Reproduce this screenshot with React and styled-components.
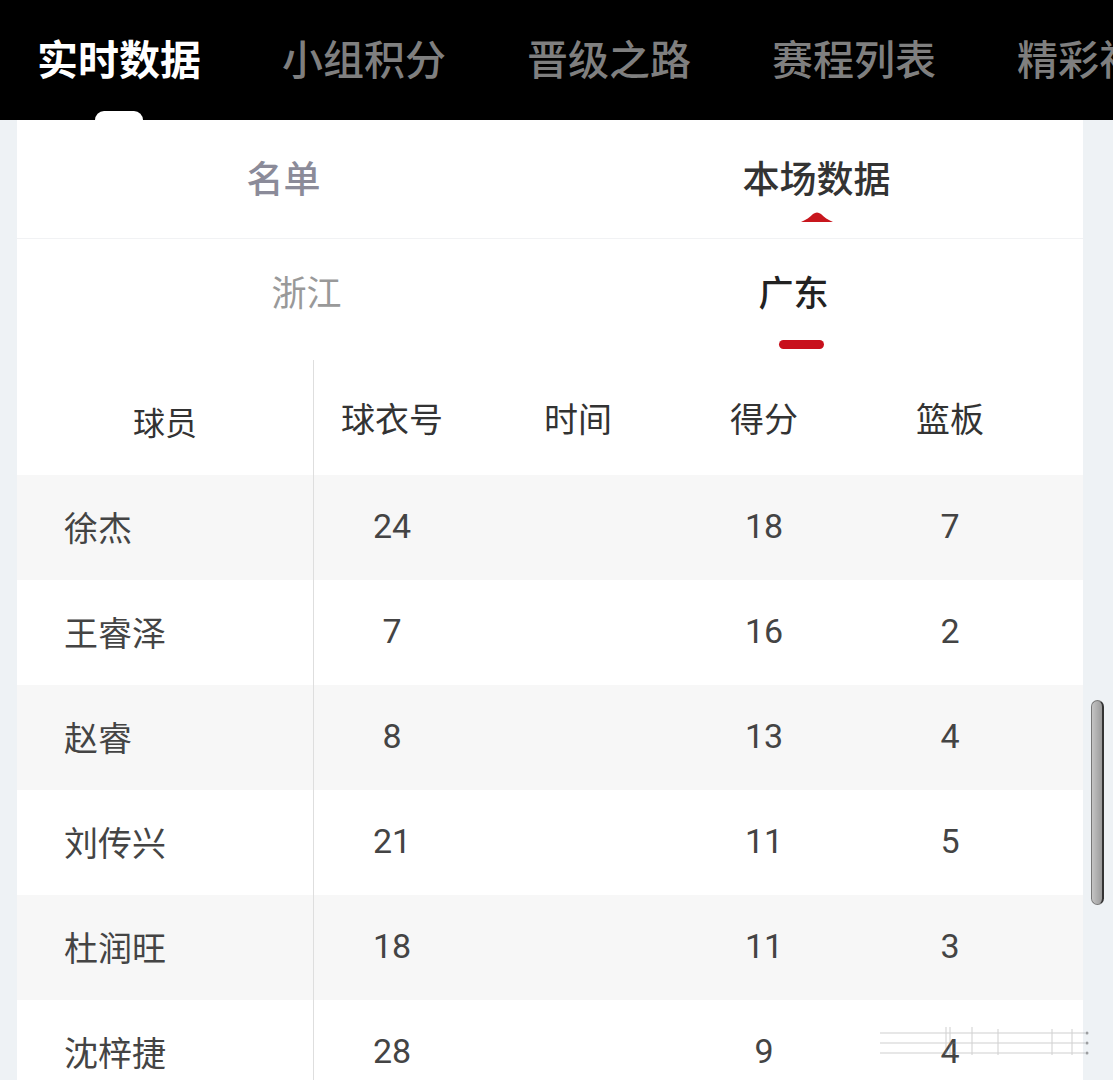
import React from 'react';
import styled, { createGlobalStyle } from 'styled-components';

const GlobalStyle = createGlobalStyle`
  body {
    margin: 0;
    background: #eef2f5;
    font-family: Roboto, 'Noto Sans CJK SC', sans-serif;
  }
`;

const Page = styled.div`
  width: 1113px;
  min-height: 1080px;
  background: #eef2f5;
  overflow: hidden;
`;

const TopBar = styled.nav`
  height: 120px;
  background: #000;
  display: flex;
  gap: 81px;
  padding-left: 37px;
  overflow: hidden;
  white-space: nowrap;
`;

const TopTab = styled.div`
  position: relative;
  display: flex;
  align-items: center;
  padding-bottom: 6px;
  font-family: 'Noto Sans CJK SC', sans-serif;
  font-size: 41px;
  font-weight: ${(p) => (p.active ? 700 : 500)};
  color: ${(p) => (p.active ? '#fff' : '#7f7f7f')};
  flex-shrink: 0;
`;

const TopIndicator = styled.span`
  position: absolute;
  left: 50%;
  bottom: -9px;
  width: 48px;
  height: 18px;
  margin-left: -24px;
  border-radius: 9px;
  background: #fff;
`;

const Card = styled.main`
  margin-left: 17px;
  width: 1066px;
  background: #fff;
`;

const SubTabs = styled.div`
  height: 118px;
  display: grid;
  grid-template-columns: 1fr 1fr;
  border-bottom: 1px solid #f1f2f4;
`;

const SubTab = styled.div`
  display: flex;
  flex-direction: column;
  align-items: center;
  padding-top: 35px;
  font-family: 'Noto Sans CJK SC', sans-serif;
  font-size: 37px;
  line-height: 44px;
  font-weight: 500;
  color: ${(p) => (p.active ? '#333' : '#8b8b99')};
`;

const Dome = styled.svg`
  margin-top: 13px;
  display: block;
`;

const TeamTabs = styled.div`
  height: 121px;
  display: grid;
  grid-template-columns: 1fr 1fr;
  padding: 0 46px;
`;

const TeamTab = styled.div`
  display: flex;
  flex-direction: column;
  align-items: center;
  padding-top: 31px;
  font-family: 'Noto Sans CJK SC', sans-serif;
  font-size: 35px;
  line-height: 42px;
  font-weight: ${(p) => (p.active ? 500 : 400)};
  color: ${(p) => (p.active ? '#222' : '#999')};
`;

const TeamBar = styled.span`
  margin-top: 28px;
  margin-left: 16px;
  width: 45px;
  height: 9px;
  border-radius: 5px;
  background: #c8101c;
`;

const Table = styled.div`
  display: flex;
  flex-direction: column;
`;

const Row = styled.div`
  display: grid;
  grid-template-columns: 297px 171px 186px 186px 186px 40px;
  height: ${(p) => (p.header ? '115px' : '105px')};
  background: ${(p) => (p.striped ? '#f7f7f7' : '#fff')};
`;

const Cell = styled.div`
  display: flex;
  align-items: center;
  justify-content: center;
  font-family: Roboto, 'Noto Sans CJK SC', sans-serif;
  font-size: 34px;
  color: ${(p) => (p.header ? '#333' : '#444')};
  padding-bottom: ${(p) => (p.header ? '0' : '3px')};
`;

const NameCell = styled(Cell)`
  justify-content: ${(p) => (p.header ? 'center' : 'flex-start')};
  padding-left: ${(p) => (p.header ? '0' : '47px')};
  padding-top: ${(p) => (p.header ? '6px' : '0')};
  border-right: 1px solid #dedede;
  font-family: 'Noto Sans CJK SC', sans-serif;
  font-size: ${(p) => (p.header ? '32px' : '34px')};
`;

const JerseyCell = styled(Cell)`
  padding-right: 15px;
`;

const Scrollbar = styled.div`
  position: fixed;
  left: 1091px;
  top: 700px;
  width: 10px;
  height: 203px;
  border-radius: 7px;
  background: linear-gradient(to right, #c4c4c4, #9a9a9a);
  border: 1px solid #777;
  border-right: 2px solid #333;
`;

const Watermark = styled.svg`
  position: fixed;
  left: 880px;
  top: 1025px;
  opacity: 0.4;
`;

const players = [
  { name: '徐杰', no: 24, time: '', pts: 18, reb: 7 },
  { name: '王睿泽', no: 7, time: '', pts: 16, reb: 2 },
  { name: '赵睿', no: 8, time: '', pts: 13, reb: 4 },
  { name: '刘传兴', no: 21, time: '', pts: 11, reb: 5 },
  { name: '杜润旺', no: 18, time: '', pts: 11, reb: 3 },
  { name: '沈梓捷', no: 28, time: '', pts: 9, reb: 4 },
];

const topTabs = ['实时数据', '小组积分', '晋级之路', '赛程列表', '精彩视频'];

export default function App() {
  return (
    <Page>
      <GlobalStyle />
      <TopBar>
        {topTabs.map((t, i) => (
          <TopTab key={t} active={i === 0}>
            {t}
            {i === 0 && <TopIndicator />}
          </TopTab>
        ))}
      </TopBar>
      <Card>
        <SubTabs>
          <SubTab>名单</SubTab>
          <SubTab active>
            本场数据
            <Dome width="32" height="10" viewBox="0 0 32 10">
              <path d="M0 10 C5 8 9 5 12 2 Q16 -1 20 2 C23 5 27 8 32 10 Z" fill="#c8161d" />
            </Dome>
          </SubTab>
        </SubTabs>
        <TeamTabs>
          <TeamTab>浙江</TeamTab>
          <TeamTab active>
            广东
            <TeamBar />
          </TeamTab>
        </TeamTabs>
        <Table>
          <Row header>
            <NameCell header>球员</NameCell>
            <JerseyCell header>球衣号</JerseyCell>
            <Cell header>时间</Cell>
            <Cell header>得分</Cell>
            <Cell header>篮板</Cell>
            <Cell />
          </Row>
          {players.map((p, i) => (
            <Row key={p.name} striped={i % 2 === 0}>
              <NameCell>{p.name}</NameCell>
              <JerseyCell>{p.no}</JerseyCell>
              <Cell>{p.time}</Cell>
              <Cell>{p.pts}</Cell>
              <Cell>{p.reb}</Cell>
              <Cell />
            </Row>
          ))}
        </Table>
      </Card>
      <Scrollbar />
      <Watermark width="210" height="36" viewBox="0 0 210 36">
        <g stroke="#888" strokeWidth="1">
          <line x1="0" y1="8" x2="205" y2="8" />
          <line x1="0" y1="18" x2="205" y2="18" />
          <line x1="0" y1="28" x2="205" y2="28" />
          <line x1="66" y1="2" x2="66" y2="30" />
          <line x1="70" y1="2" x2="70" y2="30" />
          <line x1="92" y1="2" x2="92" y2="30" />
          <line x1="118" y1="4" x2="118" y2="30" />
          <line x1="172" y1="4" x2="172" y2="30" />
          <line x1="192" y1="4" x2="192" y2="30" />
        </g>
        <g fill="#222">
          <circle cx="207" cy="8" r="1.5" />
          <circle cx="207" cy="18" r="1.5" />
          <circle cx="207" cy="28" r="1.5" />
        </g>
      </Watermark>
    </Page>
  );
}
